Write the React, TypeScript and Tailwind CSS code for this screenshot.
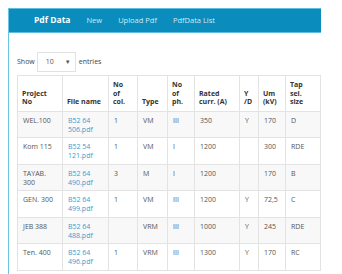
import React from "react";

const rows = [
  ["WEL.100", ["B52 64", "506.pdf"], "1", "VM", "III", "350", "Y", "170", "D"],
  ["Kom 115", ["B52 54", "121.pdf"], "1", "VM", "I", "1200", "", "300", "RDE"],
  [["TAYAB.", "300"], ["B52 64", "490.pdf"], "3", "M", "I", "1200", "", "170", "B"],
  ["GEN. 300", ["B52 64", "499.pdf"], "1", "VM", "III", "1200", "Y", "72,5", "C"],
  ["JEB 388", ["B52 64", "488.pdf"], "", "VRM", "III", "1000", "Y", "245", "RDE"],
  ["Ten. 400", ["B52 64", "496.pdf"], "1", "VRM", "III", "1300", "Y", "170", "RC"],
];

const widths = [45, 46, 29, 30, 27, 45, 19, 27, 35];
const headers: string[][] = [
  ["Project", "No"],
  ["File name"],
  ["No", "of", "col."],
  ["Type"],
  ["No", "of", "ph."],
  ["Rated", "curr. (A)"],
  ["Y", "/D"],
  ["Um", "(kV)"],
  ["Tap", "sel.", "size"],
];

export default function App() {
  return (
    <div
      className="w-[342px] h-[274px] overflow-hidden bg-white pt-[8px] pl-[8px]"
      style={{ fontFamily: '"Open Sans", "Liberation Sans", sans-serif' }}
    >
      <div className="w-[313px] h-[266px] border-l border-[#6cc4e4]">
        <div className="h-[25px] bg-[#0a8dbd] border-t border-b border-[#5fbde0] flex items-center pl-[25px] gap-[16px]">
          <span className="text-[8.5px] font-bold text-white leading-none">Pdf Data</span>
          <span className="text-[7.5px] text-[#cfe9f4] leading-none">New</span>
          <span className="text-[7.5px] text-[#cfe9f4] leading-none">Upload Pdf</span>
          <span className="text-[7.5px] text-[#cfe9f4] leading-none">PdfData List</span>
        </div>
        <div className="pl-[8px] pt-[19px]">
          <div className="flex items-center h-[20px] text-[7px] text-[#444]">
            <span>Show</span>
            <div className="ml-[2px] w-[39px] h-[20px] border border-[#e2e2e2] flex items-center justify-between pl-[8px] pr-[4px] text-[#555]">
              <span>10</span>
              <span className="text-[6px]">▼</span>
            </div>
            <span className="ml-[3px]">entries</span>
          </div>
          <table className="mt-[3px] table-fixed border-collapse w-[303px] text-[7px] leading-[9px]">
            <colgroup>
              {widths.map((w, i) => (
                <col key={i} style={{ width: w }} />
              ))}
            </colgroup>
            <thead>
              <tr>
                {headers.map((h, i) => (
                  <th
                    key={i}
                    className="border border-[#e3e3e3] align-bottom text-left font-bold text-[#333] px-[4px] pt-[5px] pb-[4px] leading-[8.5px]"
                  >
                    {h.map((l, j) => (
                      <div key={j} className="whitespace-nowrap">{l}</div>
                    ))}
                  </th>
                ))}
              </tr>
            </thead>
            <tbody>
              {rows.map((r, ri) => (
                <tr key={ri} className={ri % 2 === 0 ? "bg-[#f8f8f8]" : "bg-white"}>
                  {r.map((c, ci) => (
                    <td
                      key={ci}
                      className={
                        "border border-[#e3e3e3] align-top px-[5px] pt-[4px] pb-[3.6px] whitespace-nowrap " +
                        (ci === 1 ? "text-[#3a9bcf]" : "text-[#555]")
                      }
                    >
                      {Array.isArray(c)
                        ? c.map((l, li) => <div key={li}>{l}</div>)
                        : <div>{c}</div>}
                      {Array.isArray(c) ? null : <div>&nbsp;</div>}
                    </td>
                  ))}
                </tr>
              ))}
            </tbody>
          </table>
        </div>
      </div>
    </div>
  );
}
